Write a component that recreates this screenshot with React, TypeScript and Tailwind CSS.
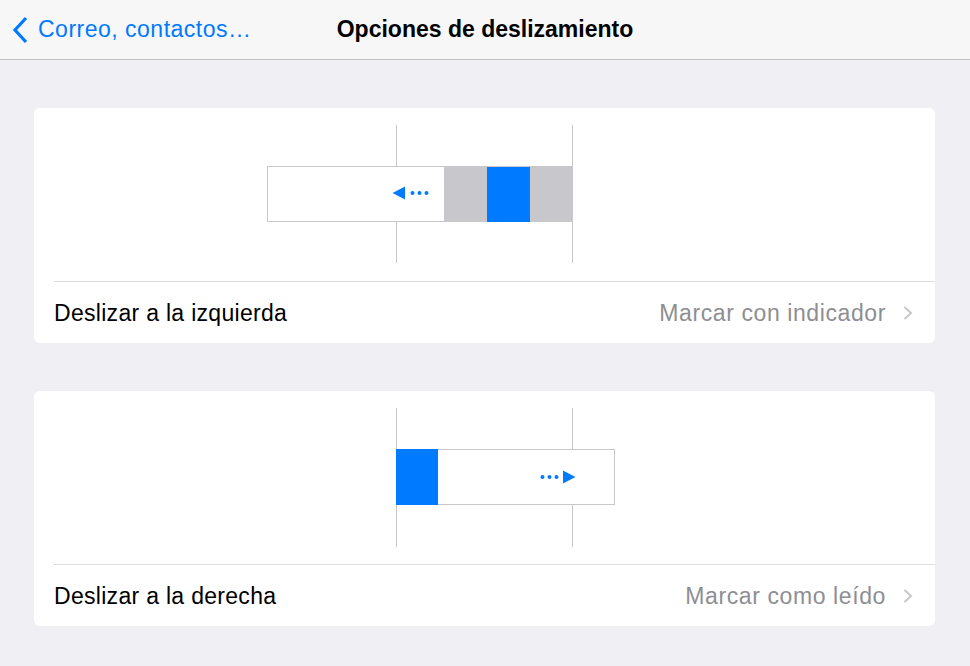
const Chevron = () => (
  <svg width="10" height="14" viewBox="0 0 10 14" className="ml-[17px]">
    <path d="M1.5 1 L8 7 L1.5 13" fill="none" stroke="#c7c7cc" strokeWidth="2" />
  </svg>
);

const SwipeLeft = () => (
  <svg width="901" height="173" className="block">
    <line x1="362.5" y1="17" x2="362.5" y2="155" stroke="#c8c7cc" />
    <line x1="538.5" y1="17" x2="538.5" y2="155" stroke="#c8c7cc" />
    <rect x="233.5" y="58.5" width="305" height="55" fill="#ffffff" stroke="#c8c7cc" />
    <rect x="410" y="59" width="129" height="55" fill="#c7c7cc" />
    <rect x="453" y="59" width="43" height="55" fill="#007aff" />
    <path d="M358.5 85 L371 78.5 L371 91.5 Z" fill="#007aff" />
    <circle cx="378.5" cy="85" r="2" fill="#007aff" />
    <circle cx="385.5" cy="85" r="2" fill="#007aff" />
    <circle cx="392.5" cy="85" r="2" fill="#007aff" />
  </svg>
);

const SwipeRight = () => (
  <svg width="901" height="173" className="block">
    <line x1="362.5" y1="17" x2="362.5" y2="156" stroke="#c8c7cc" />
    <line x1="538.5" y1="17" x2="538.5" y2="156" stroke="#c8c7cc" />
    <rect x="362.5" y="58.5" width="218" height="55" fill="#ffffff" stroke="#c8c7cc" />
    <rect x="362" y="58" width="42" height="56" fill="#007aff" />
    <circle cx="508.5" cy="86" r="2" fill="#007aff" />
    <circle cx="515.5" cy="86" r="2" fill="#007aff" />
    <circle cx="522.5" cy="86" r="2" fill="#007aff" />
    <path d="M541.5 86 L529 79.5 L529 92.5 Z" fill="#007aff" />
  </svg>
);

const SwipeCard = ({
  label,
  value,
  left,
}: {
  label: string;
  value: string;
  left: boolean;
}) => (
  <div className="bg-white rounded-[6px] overflow-hidden">
    {left ? <SwipeLeft /> : <SwipeRight />}
    <div className="ml-[20px] border-t border-[#dcdce0] h-[62px] flex items-center pr-[22px] pt-[1px]">
      <span className="text-[23px] tracking-[0.3px] text-black">{label}</span>
      <span className="ml-auto text-[23px] tracking-[0.6px] text-[#8e8e93]">{value}</span>
      <Chevron />
    </div>
  </div>
);

export default function App() {
  return (
    <div
      className="w-[970px] h-[666px] bg-[#efeff4] overflow-hidden"
      style={{ fontFamily: '"Liberation Sans", Arial, sans-serif' }}
    >
      <div className="relative h-[60px] bg-[#f7f7f8] border-b border-[#c4c4c7] flex items-center justify-center">
        <div className="absolute left-[11px] top-0 h-full flex items-center text-[#007aff]">
          <svg width="18" height="28" viewBox="0 0 18 28">
            <path d="M15 2 L4 14 L15 26" fill="none" stroke="#007aff" strokeWidth="3.2" />
          </svg>
          <span className="ml-[9px] text-[23px] tracking-[0.5px]">Correo, contactos…</span>
        </div>
        <span className="text-[23px] font-bold text-black">Opciones de deslizamiento</span>
      </div>
      <div className="pt-[48px] pl-[34px] pr-[35px] flex flex-col gap-[48px]">
        <SwipeCard label="Deslizar a la izquierda" value="Marcar con indicador" left />
        <SwipeCard label="Deslizar a la derecha" value="Marcar como leído" left={false} />
      </div>
    </div>
  );
}
